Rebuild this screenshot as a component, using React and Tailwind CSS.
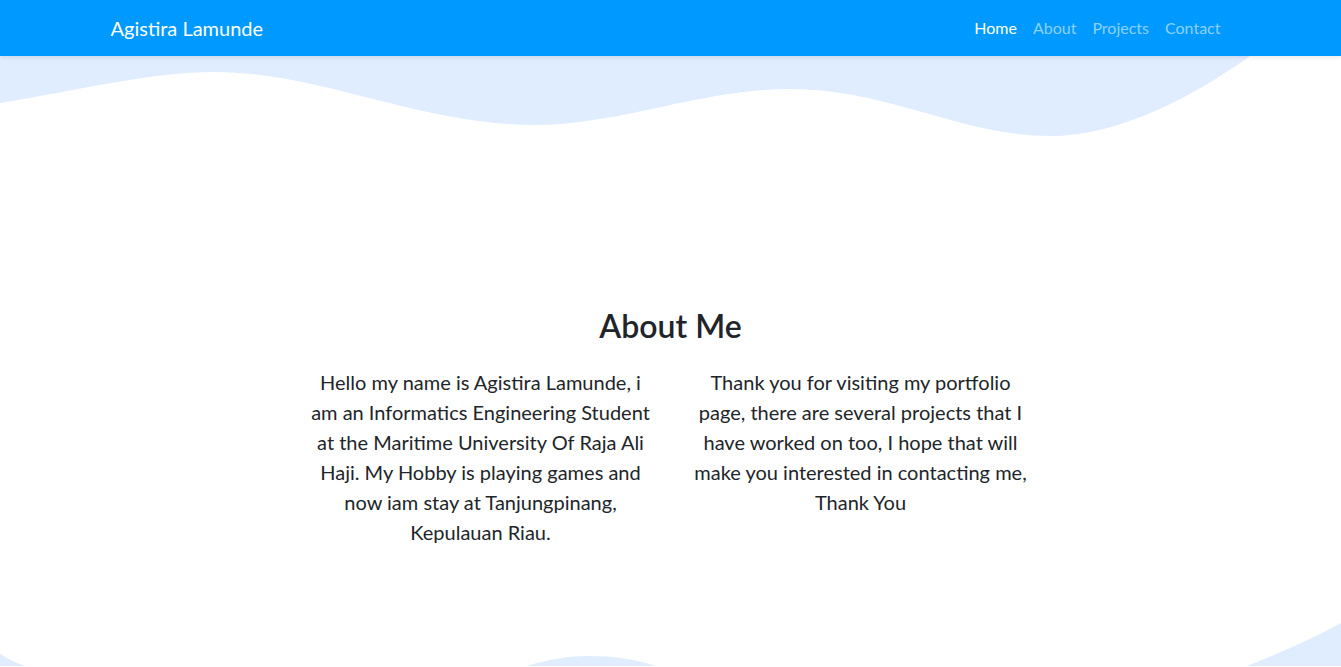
export default function App() {
  const font = { fontFamily: "Lato, 'Noto Sans', sans-serif" };
  const left = [
    "Hello my name is Agistira Lamunde, i",
    "am an Informatics Engineering Student",
    "at the Maritime University Of Raja Ali",
    "Haji. My Hobby is playing games and",
    "now iam stay at Tanjungpinang,",
    "Kepulauan Riau.",
  ];
  const right = [
    "Thank you for visiting my portfolio",
    "page, there are several projects that I",
    "have worked on too, I hope that will",
    "make you interested in contacting me,",
    "Thank You",
  ];
  return (
    <div className="h-[667px] bg-white text-[#212529] overflow-hidden" style={font}>
      <nav className="relative z-10 h-[56px] bg-[#0099ff] shadow-[0_2px_4px_rgba(0,0,0,0.08)]">
        <div className="mx-auto flex h-full w-[1140px] items-center justify-between px-[12px]">
          <span className="-ml-[2px] text-[20px] text-white">Agistira Lamunde</span>
          <ul className="flex items-center text-[16px]">
            <li className="px-[8px] text-white">Home</li>
            <li className="px-[8px] text-[#8cd1ff]">About</li>
            <li className="px-[8px] text-[#8cd1ff]">Projects</li>
            <li className="px-[8px] text-[#8cd1ff]">Contact</li>
          </ul>
        </div>
      </nav>

      <svg className="block" width="1341" height="80" viewBox="0 0 1341 80" preserveAspectRatio="none">
        <path
          d="M0,47 C80,34 150,16 214,16 C320,16 420,69 534,69 C620,69 700,33 790,33 C890,33 960,80 1051,80 C1110,80 1180,50 1250,0 L0,0 Z"
          fill="#e0ecff"
        />
      </svg>

      <section className="mx-auto w-[1140px] pt-[171px]">
        <h2 className="text-center text-[32px] font-semibold leading-[38px]">About Me</h2>
        <div className="mt-[22px] flex justify-center">
          <div className="w-[380px] px-[12px]">
            <p className="text-center text-[20px] leading-[30px]">
              {left.map((l) => (
                <span key={l} className="block whitespace-nowrap">{l}</span>
              ))}
            </p>
          </div>
          <div className="w-[380px] px-[12px]">
            <p className="text-center text-[20px] leading-[30px]">
              {right.map((l) => (
                <span key={l} className="block whitespace-nowrap">{l}</span>
              ))}
            </p>
          </div>
        </div>
      </section>

      <svg className="mt-[72px] block" width="1341" height="47" viewBox="0 0 1341 47" preserveAspectRatio="none">
        <path d="M0,35 C8,40 16,44 25,47 L0,47 Z" fill="#e0ecff" />
        <path d="M527,47 C550,40 568,37 590,37 C614,37 634,40 655,47 Z" fill="#e0ecff" />
        <path d="M1247,47 C1280,34 1312,20 1341,4 L1341,47 Z" fill="#e0ecff" />
      </svg>
    </div>
  );
}
